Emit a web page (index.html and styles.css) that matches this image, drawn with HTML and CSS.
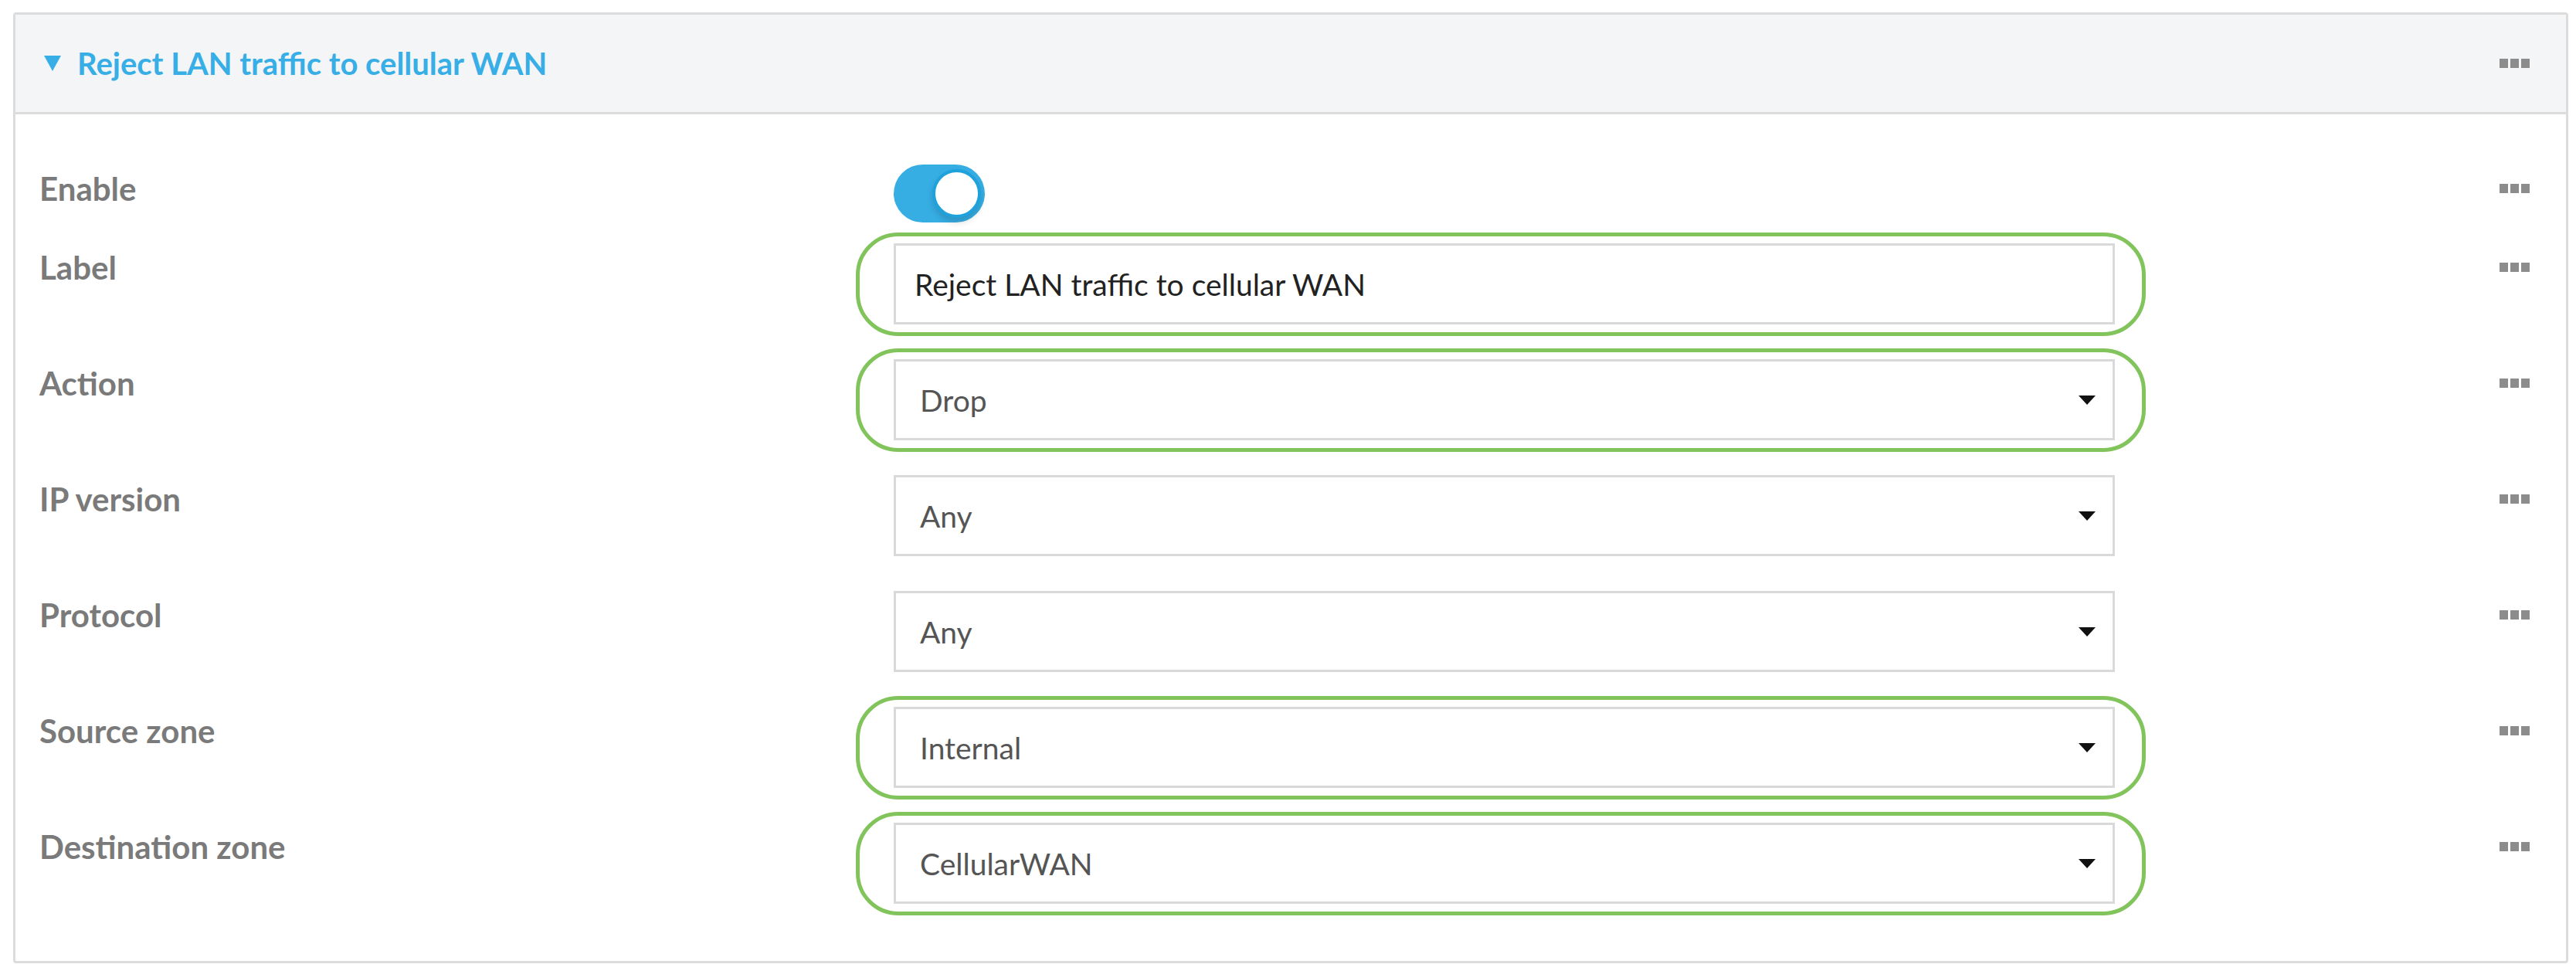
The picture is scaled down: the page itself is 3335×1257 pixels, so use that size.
FILE: index.html
```html
<!DOCTYPE html>
<html lang="en">
<head>
    <meta charset="UTF-8">
    <meta name="viewport" content="width=device-width, initial-scale=1.0">
    <title>Firewall rule</title>
    <link rel="stylesheet" href="styles.css">
</head>
<body>

    <div class="panel">
        <div class="panel-header">
            <span class="arrow"></span>
            <span class="panel-title">Reject LAN traffic to cellular WAN</span>
            <span class="more"><i></i><i></i><i></i></span>
        </div>

        <div class="panel-body">
            <div class="row row-switch">
                <label class="field-label">Enable</label>
                <div class="control">
                    <span class="switch"><span class="knob"></span></span>
                </div>
                <span class="more"><i></i><i></i><i></i></span>
            </div>

            <div class="row">
                <label class="field-label" for="rule-label">Label</label>
                <div class="control marked">
                    <input type="text" id="rule-label" class="text-input" value="Reject LAN traffic to cellular WAN">
                </div>
                <span class="more"><i></i><i></i><i></i></span>
            </div>

            <div class="row">
                <label class="field-label">Action</label>
                <div class="control marked">
                    <div class="select"><span>Drop</span><svg class="caret" width="22" height="12" viewBox="0 0 22 12"><polygon points="0,0 22,0 11,12"/></svg></div>
                </div>
                <span class="more"><i></i><i></i><i></i></span>
            </div>

            <div class="row">
                <label class="field-label">IP version</label>
                <div class="control">
                    <div class="select"><span>Any</span><svg class="caret" width="22" height="12" viewBox="0 0 22 12"><polygon points="0,0 22,0 11,12"/></svg></div>
                </div>
                <span class="more"><i></i><i></i><i></i></span>
            </div>

            <div class="row">
                <label class="field-label">Protocol</label>
                <div class="control">
                    <div class="select"><span>Any</span><svg class="caret" width="22" height="12" viewBox="0 0 22 12"><polygon points="0,0 22,0 11,12"/></svg></div>
                </div>
                <span class="more"><i></i><i></i><i></i></span>
            </div>

            <div class="row">
                <label class="field-label">Source zone</label>
                <div class="control marked">
                    <div class="select"><span>Internal</span><svg class="caret" width="22" height="12" viewBox="0 0 22 12"><polygon points="0,0 22,0 11,12"/></svg></div>
                </div>
                <span class="more"><i></i><i></i><i></i></span>
            </div>

            <div class="row">
                <label class="field-label">Destination zone</label>
                <div class="control marked">
                    <div class="select"><span>CellularWAN</span><svg class="caret" width="22" height="12" viewBox="0 0 22 12"><polygon points="0,0 22,0 11,12"/></svg></div>
                </div>
                <span class="more"><i></i><i></i><i></i></span>
            </div>
        </div>
    </div>

</body>
</html>
```

FILE: styles.css
```css
body {
    margin: 0;
    padding: 16px 10px 10px 17px;
    background: #fff;
    font-family: Lato, "Liberation Sans", sans-serif;
}
.panel {
    border: 3px solid #dcdcdc;
    border-radius: 4px;
}
.panel-header {
    display: flex;
    align-items: center;
    height: 126px;
    padding: 0 47px 0 37px;
    background-color: #f4f5f7; /* light grey bar */
    border-bottom: 3px solid #dcdcdc;
}
.arrow {
    width: 0;
    height: 0;
    border-left: 11px solid transparent;
    border-right: 11px solid transparent;
    border-top: 20px solid #38aee6;
    margin-right: 21px;
}
.panel-title {
    flex: 1;
    font-size: 40px;
    font-weight: bold;
    color: #38aee6;
}
.more {
    display: flex;
    align-items: center;
    justify-content: flex-end;
    gap: 3px;
    height: 62px;
}
.more i {
    display: block;
    width: 11px;
    height: 12px;
    background-color: #8c8c8c;
}
.panel-body {
    padding: 65px 47px 74px 31px;
}
.row {
    display: grid;
    grid-template-columns: 1106px 1581px 1fr;
    align-items: start;
    margin-bottom: 45px;
}
.row:last-child {
    margin-bottom: 0;
}
.row-switch {
    margin-bottom: 27px;
}
.field-label {
    font-size: 42px;
    font-weight: bold;
    line-height: 62px;
    color: #7a7a7a;
}
.control {
    position: relative;
}
/* green marker drawn round the changed fields */
.control.marked::after {
    content: "";
    position: absolute;
    top: -14px;
    bottom: -15px;
    left: -49px;
    right: -40px;
    border: 5px solid #82c45c;
    border-radius: 55px;
    pointer-events: none;
}
.switch {
    display: flex;
    justify-content: flex-end;
    align-items: center;
    box-sizing: border-box;
    width: 118px;
    height: 75px;
    padding: 0 5px;
    border-radius: 38px;
    background-color: #36aee4;
}
.knob {
    box-sizing: border-box;
    width: 63px;
    height: 63px;
    border: 4px solid #1fa2dc;
    border-radius: 50%;
    background-color: #fff;
    box-shadow: 0 6px 8px rgba(0, 0, 0, 0.15);
}
.text-input,
.select {
    box-sizing: border-box;
    width: 100%;
    height: 105px;
    margin: 0;
    border: 3px solid #d9d9d9;
    border-radius: 0;
    background: #fff;
    font-family: Lato, "Liberation Sans", sans-serif;
    font-size: 39px;
}
.text-input {
    padding: 0 24px;
    color: #222;
    outline: none;
}
.select {
    display: flex;
    align-items: center;
    justify-content: space-between;
    padding: 0 22px 0 31px;
    color: #555;
}
.caret {
    fill: #111;
}
```
